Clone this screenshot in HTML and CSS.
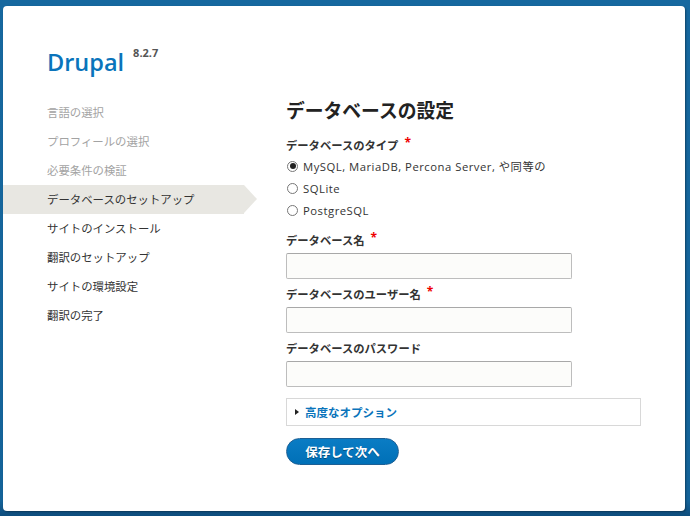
FILE: index.html
```html
<!DOCTYPE html>
<html lang="ja">
<head>
<meta charset="utf-8">
<title>Drupal インストール</title>
<link rel="stylesheet" href="styles.css">
</head>
<body>
<div class="card">
  <header class="site-header">
    <h1 class="site-name">Drupal</h1><span class="version">8.2.7</span>
  </header>
  <div class="layout">
    <ol class="steps">
      <li class="step done">言語の選択</li>
      <li class="step done">プロフィールの選択</li>
      <li class="step done">必要条件の検証</li>
      <li class="step active">データベースのセットアップ</li>
      <li class="step">サイトのインストール</li>
      <li class="step">翻訳のセットアップ</li>
      <li class="step">サイトの環境設定</li>
      <li class="step">翻訳の完了</li>
    </ol>
    <main class="main">
      <h2 class="title">データベースの設定</h2>
      <form class="form">
        <div class="label">データベースのタイプ<span class="req">*</span></div>
        <label class="radio"><span class="dot checked"></span>MySQL, MariaDB, Percona Server, や同等の</label>
        <label class="radio"><span class="dot"></span>SQLite</label>
        <label class="radio"><span class="dot"></span>PostgreSQL</label>

        <div class="label gap">データベース名<span class="req">*</span></div>
        <div class="input"></div>
        <div class="label gap-s">データベースのユーザー名<span class="req">*</span></div>
        <div class="input"></div>
        <div class="label gap-s">データベースのパスワード</div>
        <div class="input"></div>

        <div class="details"><span class="tri"></span><span class="summary">高度なオプション</span></div>
        <div class="actions"><span class="button">保存して次へ</span></div>
      </form>
    </main>
  </div>
</div>
</body>
</html>
```
FILE: styles.css
```css
html, body {
  margin: 0;
  padding: 0;
}
body {
  width: 690px;
  height: 516px;
  overflow: hidden;
  background: linear-gradient(to bottom, #16689f 0%, #146399 97%, #0e4d7d 100%);
  padding: 6px 0 0 3px;
  box-sizing: border-box;
  font-family: "Open Sans", "Noto Sans CJK JP", sans-serif;
  color: #333;
}
.card {
  width: 682px;
  height: 505px;
  background: #fff;
  border-radius: 4px;
  box-shadow: 1px 1px 2px rgba(0, 0, 0, 0.35);
  padding-top: 41px;
  box-sizing: border-box;
}
.site-header {
  padding-left: 44px;
  height: 30px;
  display: flex;
  align-items: flex-start;
}
.site-name {
  margin: 0;
  font-family: "Open Sans", sans-serif;
  font-weight: 600;
  font-size: 23.5px;
  line-height: 30px;
  color: #0a74bb;
}
.version {
  margin-left: 9px;
  font-family: "Open Sans", sans-serif;
  font-weight: 700;
  font-size: 11px;
  line-height: 13px;
  color: #555;
  margin-top: -1px;
}
.layout {
  display: grid;
  grid-template-columns: 241px 1fr;
  column-gap: 42px;
  margin-top: 21px;
}
.steps {
  list-style: none;
  margin: 0;
  padding: 0;
}
.step {
  position: relative;
  height: 29px;
  line-height: 29px;
  padding-left: 44px;
  font-size: 11.4px;
  color: #333;
}
.step.done {
  color: #a3a3a3;
}
.step.active {
  background: #e8e7e2;
}
.step.active::after {
  content: "";
  position: absolute;
  top: 0;
  right: -13px;
  border-left: 13px solid #e8e7e2;
  border-top: 14.5px solid transparent;
  border-bottom: 14.5px solid transparent;
}
.main {
  width: 355px;
}
.title {
  margin: -1px 0 0;
  font-size: 18.8px;
  line-height: 28px;
  font-weight: 700;
  color: #222;
}
.form {
  margin-top: 12px;
  display: flex;
  flex-direction: column;
  align-items: flex-start;
}
.label {
  font-size: 11.3px;
  line-height: 18px;
  font-weight: 700;
  color: #333;
}
.label.gap {
  margin-top: 11px;
}
.label.gap-s {
  margin-top: 7px;
}
.req {
  display: inline-block;
  margin-left: 6px;
  color: #e00;
  font-size: 12px;
  font-weight: 700;
  vertical-align: top;
  line-height: 12px;
}
.radio {
  display: flex;
  align-items: center;
  height: 22px;
  font-size: 11.3px;
  letter-spacing: 0.5px;
  color: #333;
}
.dot {
  width: 9px;
  height: 9px;
  border: 1px solid #777;
  border-radius: 50%;
  margin: 0 5px 0 1px;
  position: relative;
  background: #fff;
}
.dot.checked::after {
  content: "";
  position: absolute;
  left: 1.5px;
  top: 1.5px;
  width: 6px;
  height: 6px;
  border-radius: 50%;
  background: #222;
}
.input {
  margin-top: 3px;
  width: 286px;
  height: 26px;
  box-sizing: border-box;
  background: #fcfcfa;
  border: 1px solid #bdbdbd;
  border-top-color: #a8a8a8;
  border-radius: 2px;
}
.details {
  margin-top: 11px;
  width: 355px;
  height: 28px;
  box-sizing: border-box;
  border: 1px solid #d8d8d8;
  display: flex;
  align-items: center;
  padding-left: 8px;
}
.tri {
  width: 0;
  height: 0;
  border-left: 4px solid #222;
  border-top: 3.5px solid transparent;
  border-bottom: 3.5px solid transparent;
  margin-right: 6px;
}
.summary {
  font-size: 11.5px;
  font-weight: 700;
  color: #0a74bb;
}
.actions {
  margin-top: 12px;
}
.button {
  display: flex;
  align-items: center;
  justify-content: center;
  width: 113px;
  height: 27px;
  box-sizing: border-box;
  border-radius: 14px;
  border: 1px solid #1d5f94;
  background: linear-gradient(to bottom, #0a7cc4, #0070b7);
  color: #fff;
  font-size: 12.5px;
  font-weight: 700;
  text-shadow: 0 1px rgba(0, 0, 0, 0.35);
}
```
